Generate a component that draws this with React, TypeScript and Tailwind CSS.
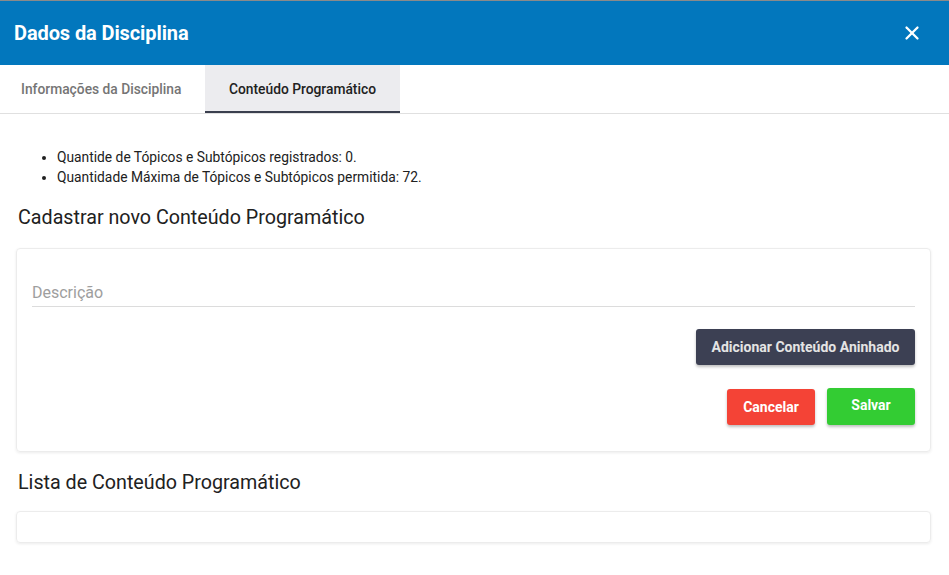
import { X } from "lucide-react";

export default function App() {
  return (
    <div className="w-[949px] h-[575px] bg-white overflow-hidden font-['Roboto',sans-serif] text-[#212121]">
      {/* ── Header ── */}
      <div className="border-t border-[#8a8a8a] h-[65px] bg-[#0277bd] flex items-center justify-between pl-[14px] pr-[26px]">
        <h1 className="text-white text-[20px] font-bold tracking-[-0.1px]">Dados da Disciplina</h1>
        <X className="w-[22px] h-[22px] text-white" strokeWidth={2.5} />
      </div>

      {/* ── Tabs ── */}
      <div className="flex h-[49px] border-b border-[#e0e0e0]">
        <button className="w-[205px] flex items-center pl-[21px] text-[13.8px] font-medium text-[#757575]">
          Informações da Disciplina
        </button>
        <button className="w-[195px] flex items-center justify-center text-[13.8px] font-medium text-[#212121] bg-[#ececef] border-b-2 border-[#3a3f4e] pt-[2px]">
          Conteúdo Programático
        </button>
      </div>

      {/* ── Content ── */}
      <div className="pl-[16px] pr-[18px]">
        <ul className="list-disc pl-[41px] pt-[33px] text-[13.8px] leading-[20px]">
          <li>Quantide de Tópicos e Subtópicos registrados: 0.</li>
          <li>Quantidade Máxima de Tópicos e Subtópicos permitida: 72.</li>
        </ul>

        <h2 className="text-[19.7px] pl-[2px] mt-[18px] leading-[26px]">Cadastrar novo Conteúdo Programático</h2>

        <div className="mt-[17px] h-[204px] rounded-[4px] border border-[#ececec] shadow-[0_1px_3px_rgba(0,0,0,0.08)] px-[15px] pt-[34px]">
          <div className="border-b border-[#dcdcdc] pb-[3px] text-[16px] text-[#9e9e9e] leading-[20px]">Descrição</div>
          <div className="flex justify-end mt-[22px]">
            <button className="w-[219px] h-[36px] rounded-[3px] bg-[#3c4053] text-[#e4e4e4] text-[14px] font-bold shadow-[0_2px_3px_rgba(0,0,0,0.25)]">
              Adicionar Conteúdo Aninhado
            </button>
          </div>
          <div className="flex justify-end gap-[12px] mt-[23px]">
            <button className="w-[88px] h-[36px] mt-[1px] rounded-[3px] bg-[#f44336] text-white text-[14px] font-bold shadow-[0_2px_3px_rgba(0,0,0,0.25)]">
              Cancelar
            </button>
            <button className="w-[88px] h-[37px] rounded-[3px] bg-[#33cc33] text-white text-[14px] font-bold shadow-[0_2px_3px_rgba(0,0,0,0.25)] pb-[2px]">
              Salvar
            </button>
          </div>
        </div>

        <h2 className="text-[19.7px] pl-[2px] mt-[18px] leading-[26px]">Lista de Conteúdo Programático</h2>

        <div className="mt-[15px] h-[32px] rounded-[4px] border border-[#ececec] shadow-[0_1px_3px_rgba(0,0,0,0.08)]" />
      </div>
    </div>
  );
}
